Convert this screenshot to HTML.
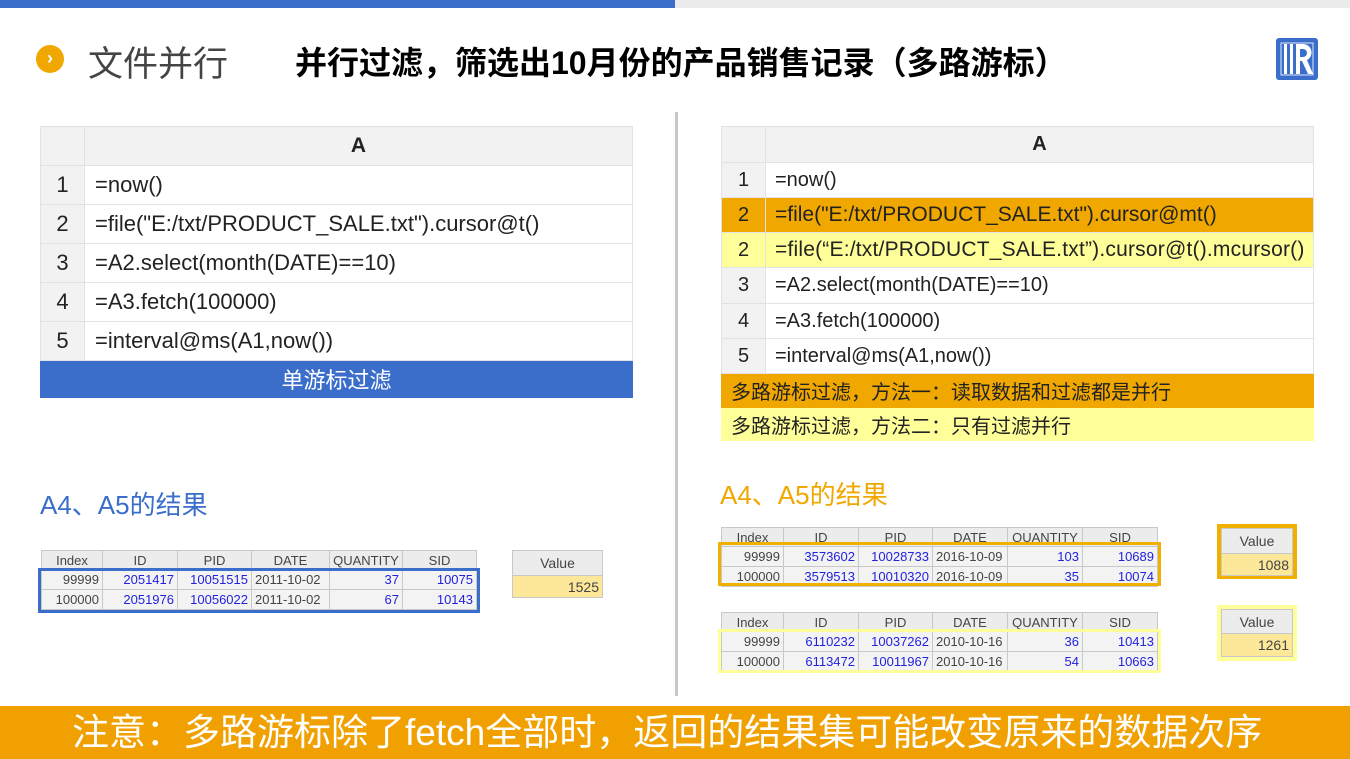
<!DOCTYPE html>
<html><head><meta charset="utf-8"><style>
*{margin:0;padding:0;box-sizing:border-box}
body{width:1350px;height:759px;position:relative;overflow:hidden;background:#fff;font-family:"Liberation Sans","Noto Sans CJK SC",sans-serif;color:#222}
.a{position:absolute}
table{border-collapse:collapse;position:absolute;table-layout:fixed}
.g td{border:1px solid #e2e2e2;white-space:nowrap;overflow:hidden}
.g td.n{background:#f2f2f2;text-align:center}
.s td{border:1px solid #c8c8c8;font-size:13px;height:20px;padding:0 3px;background:#f3f3f3;color:#444;text-align:right;white-space:nowrap;overflow:hidden}
.s tr.h td{text-align:center;background:#ececec;height:19px}
.s td.b{color:#2222dd}
.s td.c{text-align:left}
</style></head><body>
<div class="a" style="left:0;top:0;width:675px;height:8px;background:#3b6ecb"></div>
<div class="a" style="left:675px;top:0;width:675px;height:8px;background:#ebebeb"></div>
<div class="a" style="left:36px;top:45px;width:28px;height:28px;border-radius:50%;background:#f0a800;color:#fff;font-size:18px;font-weight:bold;text-align:center;line-height:27px">›</div>
<div class="a" style="left:88px;top:36px;font-size:35px;color:#444">文件并行</div>
<div class="a" style="left:295px;top:38px;font-size:32px;font-weight:bold;color:#000;white-space:nowrap">并行过滤，筛选出10月份的产品销售记录（多路游标）</div>
<svg class="a" style="left:1276px;top:38px" width="42" height="42" viewBox="0 0 42 42"><rect width="42" height="42" rx="3" fill="#3b6ecb"/><rect x="5" y="5" width="32" height="32" fill="none" stroke="#dfe8f7" stroke-width="1"/><rect x="8" y="6" width="3" height="30" fill="#fff"/><rect x="14" y="6" width="3" height="30" fill="#fff"/><path d="M20 6h7a8.5 8.5 0 0 1 4 16l6 14h-5l-6-13h-2v13h-4z M24 11v8h3a4 4 0 0 0 0-8z" fill="#fff" fill-rule="evenodd"/></svg>

<table class="g" style="left:40px;top:126px;width:593px;font-size:22px">
<col style="width:44px"><col>
<tr style="height:39px"><td class="n"></td><td class="n" style="font-weight:bold;font-size:21px">A</td></tr>
<tr style="height:39px"><td class="n">1</td><td style="padding-left:10px">=now()</td></tr>
<tr style="height:39px"><td class="n">2</td><td style="padding-left:10px">=file("E:/txt/PRODUCT_SALE.txt").cursor@t()</td></tr>
<tr style="height:39px"><td class="n">3</td><td style="padding-left:10px">=A2.select(month(DATE)==10)</td></tr>
<tr style="height:39px"><td class="n">4</td><td style="padding-left:10px">=A3.fetch(100000)</td></tr>
<tr style="height:39px"><td class="n">5</td><td style="padding-left:10px">=interval@ms(A1,now())</td></tr>
<tr style="height:37px"><td colspan="2" style="background:#3b6ecb;color:#fff;text-align:center;border-color:#3b6ecb">单游标过滤</td></tr>
</table>

<div class="a" style="left:675px;top:112px;width:3px;height:584px;background:#c8c8c8"></div>

<table class="g" style="left:721px;top:126px;width:593px;font-size:20px">
<col style="width:44px"><col>
<tr style="height:36px"><td class="n"></td><td class="n" style="font-weight:bold">A</td></tr>
<tr style="height:35px"><td class="n">1</td><td style="padding-left:9px">=now()</td></tr>
<tr style="height:35px;background:#f0a800"><td class="n" style="background:#f0a800">2</td><td style="padding-left:9px;font-size:21px">=file("E:/txt/PRODUCT_SALE.txt").cursor@mt()</td></tr>
<tr style="height:35px;background:#ffff99"><td class="n" style="background:#ffff99">2</td><td style="padding-left:9px;font-size:21px;letter-spacing:0.2px">=file(“E:/txt/PRODUCT_SALE.txt”).cursor@t().mcursor()</td></tr>
<tr style="height:36px"><td class="n">3</td><td style="padding-left:9px">=A2.select(month(DATE)==10)</td></tr>
<tr style="height:35px"><td class="n">4</td><td style="padding-left:9px">=A3.fetch(100000)</td></tr>
<tr style="height:35px"><td class="n">5</td><td style="padding-left:9px">=interval@ms(A1,now())</td></tr>
<tr style="height:34px"><td colspan="2" style="background:#f0a800;padding-left:9px;border-color:#f0a800">多路游标过滤，方法一：读取数据和过滤都是并行</td></tr>
<tr style="height:33px"><td colspan="2" style="background:#ffff99;padding-left:9px;border-color:#ffff99">多路游标过滤，方法二：只有过滤并行</td></tr>
</table>

<div class="a" style="left:40px;top:485px;font-size:26px;color:#3b6ecb">A4、A5的结果</div>
<div class="a" style="left:720px;top:475px;font-size:26px;color:#f0a800">A4、A5的结果</div>

<table class="s" style="left:41px;top:550px;width:436px">
<col style="width:61px"><col style="width:75px"><col style="width:74px"><col style="width:78px"><col style="width:73px"><col>
<tr class="h"><td>Index</td><td>ID</td><td>PID</td><td>DATE</td><td>QUANTITY</td><td>SID</td></tr>
<tr><td>99999</td><td class="b">2051417</td><td class="b">10051515</td><td class="c">2011-10-02</td><td class="b">37</td><td class="b">10075</td></tr>
<tr><td>100000</td><td class="b">2051976</td><td class="b">10056022</td><td class="c">2011-10-02</td><td class="b">67</td><td class="b">10143</td></tr>
</table>
<div class="a" style="left:38px;top:568px;width:442px;height:45px;border:3px solid #3b6ecb"></div>

<table class="s" style="left:512px;top:550px;width:91px">
<tr class="h"><td style="height:25px;font-size:14px">Value</td></tr>
<tr><td style="background:#fde89a;height:22px;font-size:14px">1525</td></tr>
</table>

<table class="s" style="left:721px;top:527px;width:437px">
<col style="width:62px"><col style="width:75px"><col style="width:74px"><col style="width:75px"><col style="width:75px"><col>
<tr class="h"><td style="height:18px">Index</td><td>ID</td><td>PID</td><td>DATE</td><td>QUANTITY</td><td>SID</td></tr>
<tr><td>99999</td><td class="b">3573602</td><td class="b">10028733</td><td class="c">2016-10-09</td><td class="b">103</td><td class="b">10689</td></tr>
<tr><td>100000</td><td class="b">3579513</td><td class="b">10010320</td><td class="c">2016-10-09</td><td class="b">35</td><td class="b">10074</td></tr>
</table>
<div class="a" style="left:718px;top:542px;width:443px;height:44px;border:3px solid #f0b000"></div>

<table class="s" style="left:721px;top:612px;width:437px">
<col style="width:62px"><col style="width:75px"><col style="width:74px"><col style="width:75px"><col style="width:75px"><col>
<tr class="h"><td>Index</td><td>ID</td><td>PID</td><td>DATE</td><td>QUANTITY</td><td>SID</td></tr>
<tr><td>99999</td><td class="b">6110232</td><td class="b">10037262</td><td class="c">2010-10-16</td><td class="b">36</td><td class="b">10413</td></tr>
<tr><td>100000</td><td class="b">6113472</td><td class="b">10011967</td><td class="c">2010-10-16</td><td class="b">54</td><td class="b">10663</td></tr>
</table>
<div class="a" style="left:718px;top:629px;width:443px;height:44px;border:3px solid #ffff99"></div>

<div class="a" style="left:1217px;top:524px;width:80px;height:55px;border:4px solid #f0b000;background:#fff"></div>
<table class="s" style="left:1221px;top:528px;width:72px">
<tr class="h"><td style="height:25px;font-size:14px">Value</td></tr>
<tr><td style="background:#fde89a;height:22px;font-size:14px">1088</td></tr>
</table>
<div class="a" style="left:1217px;top:605px;width:80px;height:56px;border:4px solid #ffff99;background:#fff"></div>
<table class="s" style="left:1221px;top:609px;width:72px">
<tr class="h"><td style="height:24px;font-size:14px">Value</td></tr>
<tr><td style="background:#fde89a;height:23px;font-size:14px">1261</td></tr>
</table>

<div class="a" style="left:0;top:706px;width:1350px;height:53px;background:#f0a000;color:#fff;font-size:37px;line-height:53px;padding-left:72px;white-space:nowrap">注意：多路游标除了fetch全部时，返回的结果集可能改变原来的数据次序</div>
</body></html>
